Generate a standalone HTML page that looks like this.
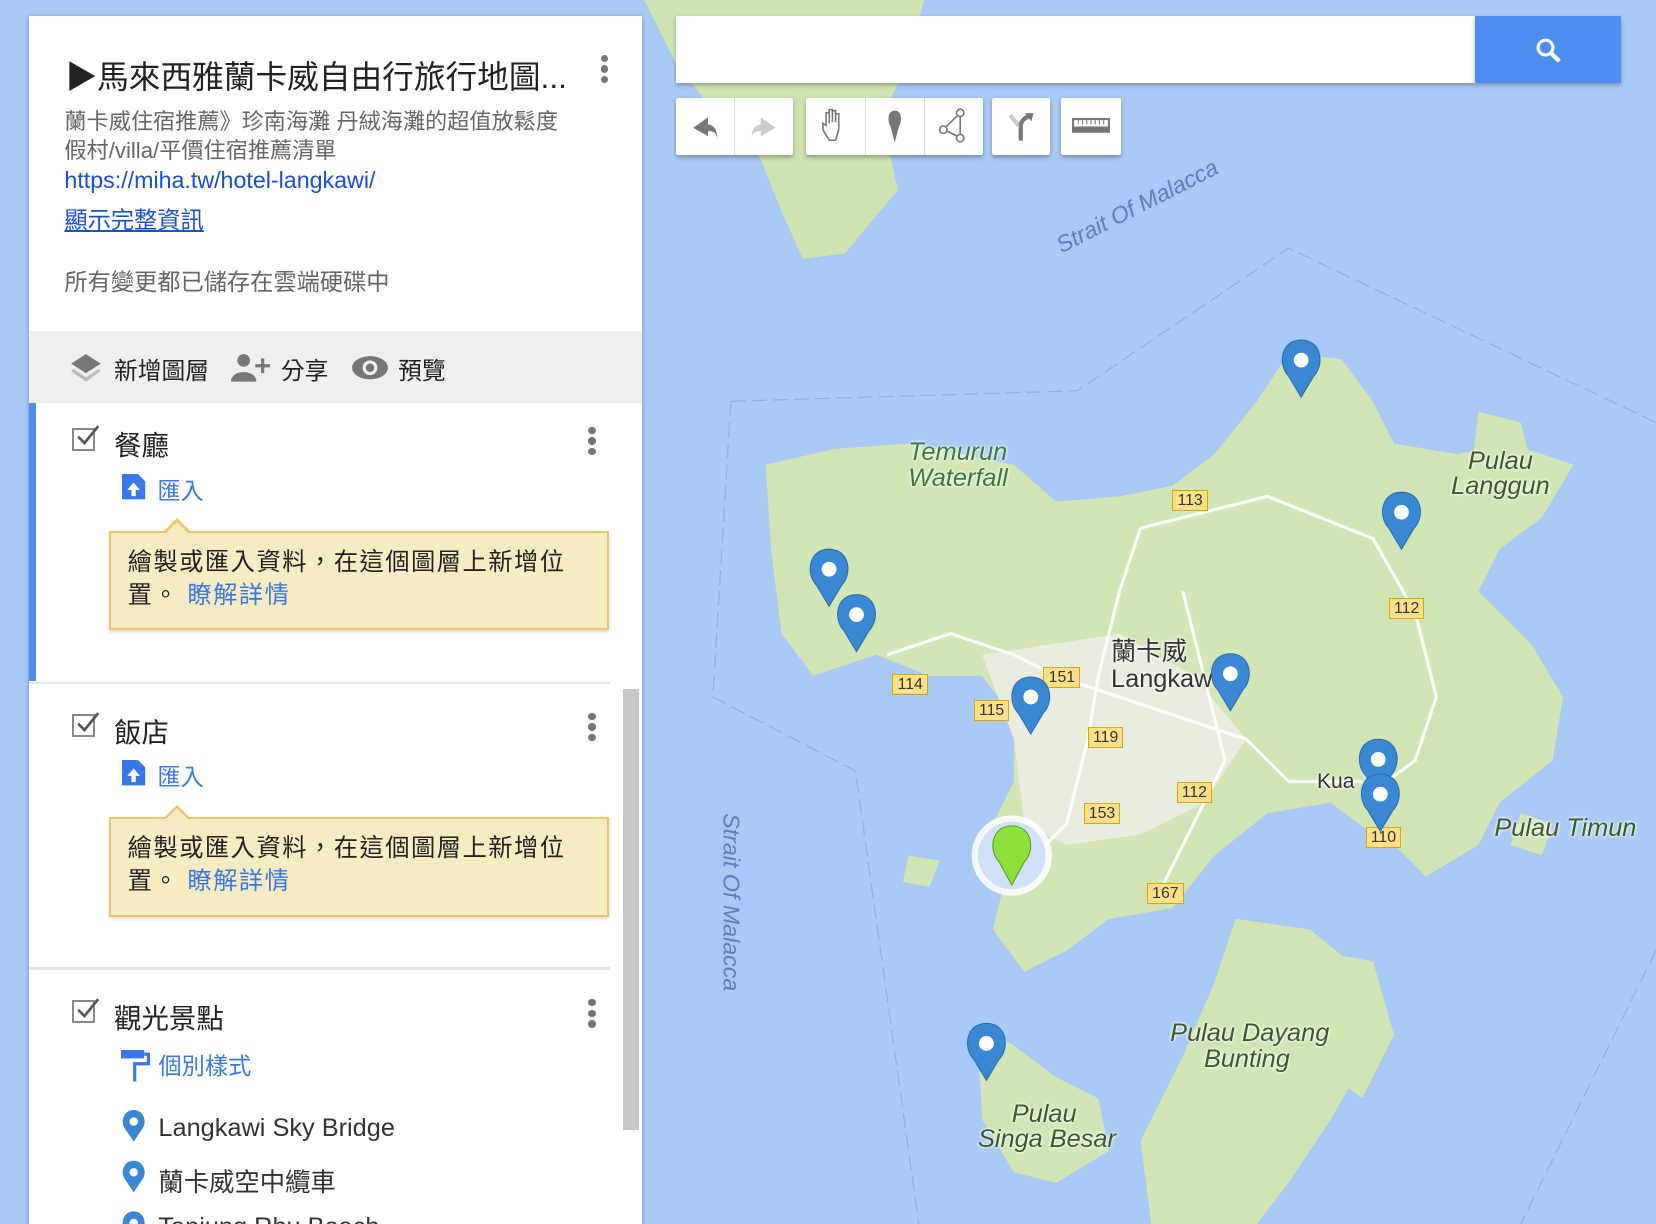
<!DOCTYPE html>
<html><head><meta charset="utf-8">
<style>
html,body{margin:0;padding:0;width:1656px;height:1224px;overflow:hidden;background:#a9c9f6}
#w{position:relative;width:1568px;height:1159px;zoom:1.05612;overflow:hidden;font-family:"Liberation Sans","Noto Sans CJK TC",sans-serif}
.a{position:absolute}
#panel{left:27px;top:15px;width:581px;height:1160px;background:#fff;box-shadow:0 1px 4px rgba(0,0,0,.3)}
.dots{position:absolute;width:7px}
.dots i{display:block;width:7px;height:7px;border-radius:50%;background:#777;margin-bottom:3px}
.cb{position:absolute;width:22px;height:22px;border:2px solid #888;box-sizing:border-box}
.cb svg{position:absolute;left:1px;top:-5px}
.lname{font-size:26px;color:#222}
.blue{color:#3b78e7}
.tip{position:absolute;left:76px;width:474px;height:94px;background:#f6ecc2;border:2px solid #f0c36d;box-sizing:border-box;font-size:23px;letter-spacing:1.4px;line-height:31px;padding:13px 16px;color:#222;box-shadow:0 2px 3px rgba(0,0,0,.15)}
.tip:before{content:"";position:absolute;left:50px;top:-14px;width:0;height:0;border:13px solid transparent;border-bottom-color:#f0c36d;border-top:0}
.tip:after{content:"";position:absolute;left:52px;top:-11px;width:0;height:0;border:11px solid transparent;border-bottom-color:#f6ecc2;border-top:0}
.btn{position:absolute;top:93px;height:54px;background:#fff;border-radius:2px;box-shadow:0 2px 4px rgba(0,0,0,.3)}
.lbl{position:absolute;font-style:italic;color:#3a5a2a;font-size:24px;line-height:24px;text-shadow:0 0 3px #fff,0 0 3px #fff}
.rt{position:absolute;background:#fce08a;border:1px solid #d9a900;font-size:15px;padding:0 4px;line-height:18px;color:#333}
</style></head><body><div id="w">
<svg class="a" style="left:0;top:0" width="1568" height="1159">
<path d="M610 0 L875 0 L860 60 L835 110 L850 180 L800 240 L760 245 L740 200 L720 150 L680 110 L640 60 L620 20Z" fill="#cfe4b1"/>
<path d="M725 440 L790 425 L860 420 L960 440 L1000 475 L1060 470 L1110 460 L1150 430 L1190 380 L1220 335 L1270 340 L1300 380 L1320 420 L1380 430 L1430 420 L1490 440 L1460 490 L1420 520 L1400 560 L1450 610 L1480 660 L1470 720 L1420 760 L1400 800 L1350 830 L1320 800 L1300 790 L1260 760 L1200 770 L1150 810 L1110 860 L1050 870 L1010 900 L970 920 L940 880 L950 840 L930 800 L960 740 L960 680 L930 640 L880 640 L830 620 L770 640 L740 600 L730 520Z" fill="#d2e5b5"/>
<path d="M930 620 L1060 600 L1130 640 L1180 700 L1140 760 L1080 790 L1010 800 L970 780 L960 700Z" fill="#e9ecdf"/>
<path d="M1170 870 L1240 880 L1290 920 L1300 990 L1260 1060 L1220 1120 L1190 1159 L1090 1159 L1080 1080 L1120 1000 L1150 930Z" fill="#d2e5b5"/>
<path d="M1240 900 L1300 910 L1320 980 L1290 1040 L1250 1010Z" fill="#d2e5b5"/>
<path d="M925 970 L960 990 L1000 1020 L1040 1040 L1050 1090 L1000 1120 L960 1110 L930 1060Z" fill="#d2e5b5"/>
<path d="M1400 390 L1440 400 L1450 440 L1420 470 L1395 430Z" fill="#d2e5b5"/>
<path d="M1440 770 L1470 780 L1460 810 L1430 800Z M860 810 L890 815 L880 840 L855 835Z" fill="#d2e5b5"/>
<g fill="none" stroke="#fff" stroke-width="3" opacity=".9">
<path d="M840 620 L900 600 L960 620 L1000 640 L1060 660 L1120 680 L1180 700 L1220 740 L1290 740"/>
<path d="M1080 500 L1200 470 L1300 510 L1340 580 L1360 660 L1340 720 L1300 750"/>
<path d="M1080 500 L1060 560 L1040 640 L1030 700 L1010 780 L960 830"/>
<path d="M1120 560 L1140 640 L1160 720 L1130 780 L1100 840"/>
</g>
<g fill="none" stroke="#8aa0c0" stroke-width="1.2" stroke-dasharray="14 6" opacity=".6">
<path d="M692 380 L1020 370 L1220 235 L1568 400"/><path d="M692 380 L675 660 L810 730 L870 1159"/><path d="M1568 900 L1440 1159"/>
</g>
<g font-family="Liberation Sans" font-style="italic" fill="#5c7fc2" font-size="22">
<text transform="translate(1005 240) rotate(-27)">Strait Of Malacca</text>
<text transform="translate(685 770) rotate(90)">Strait Of Malacca</text>
</g>
</svg>
<div class="lbl" style="left:860px;top:417px;color:#3a7a3a">Temurun<br>Waterfall</div>
<div class="lbl" style="left:1390px;top:425px">Pulau<br><span style="margin-left:-16px">Langgun</span></div>
<div class="lbl" style="left:1415px;top:773px;font-style:italic">Pulau Timun</div>
<div class="lbl" style="left:1108px;top:967px">Pulau Dayang<br><span style="margin-left:32px">Bunting</span></div>
<div class="lbl" style="left:958px;top:1043px">Pulau<br><span style="margin-left:-32px">Singa Besar</span></div>
<div class="lbl" style="left:1052px;top:605px;font-style:normal;color:#333;line-height:26px">蘭卡威<br>Langkaw</div>
<div class="lbl" style="left:1247px;top:728px;font-style:normal;color:#333;font-size:20px">Kua</div>
<div class="rt" style="left:1110px;top:464px">113</div>
<div class="rt" style="left:1315px;top:566px">112</div>
<div class="rt" style="left:845px;top:638px">114</div>
<div class="rt" style="left:988px;top:632px">151</div>
<div class="rt" style="left:922px;top:663px">115</div>
<div class="rt" style="left:1030px;top:688px">119</div>
<div class="rt" style="left:1114px;top:740px">112</div>
<div class="rt" style="left:1026px;top:760px">153</div>
<div class="rt" style="left:1086px;top:836px">167</div>
<div class="rt" style="left:1293px;top:783px">110</div>
<svg class="a" style="left:0;top:0" width="1568" height="1159">
<defs><g id="pin"><path d="M0 0 C-20 0 -22 24 -12 34 L0 54 L12 34 C22 24 20 0 0 0Z" fill="#3a87d3" stroke="#2a6cb0" stroke-width="1"/><circle cx="0" cy="19" r="7" fill="#fff"/></g></defs>
<use href="#pin" x="1232" y="322"/><use href="#pin" x="1327" y="466"/><use href="#pin" x="785" y="520"/><use href="#pin" x="811" y="563"/><use href="#pin" x="1165" y="619"/><use href="#pin" x="976" y="641"/><use href="#pin" x="1305" y="700"/><use href="#pin" x="1307" y="733"/><use href="#pin" x="934" y="969"/>
<circle cx="958" cy="810" r="38" fill="#fff" opacity=".85"/><circle cx="958" cy="810" r="32" fill="#cfe0f8"/>
<path d="M958 782 C938 782 936 806 946 816 L958 838 L970 816 C980 806 978 782 958 782Z" fill="#8fe03a" stroke="#5a9a20"/>
</svg>
<div class="a" style="left:640px;top:15px;width:757px;height:64px;background:#fff;box-shadow:0 2px 4px rgba(0,0,0,.3)"></div>
<div class="a" style="left:1397px;top:15px;width:138px;height:64px;background:#4d8ef0;box-shadow:0 2px 4px rgba(0,0,0,.3)">
<svg style="position:absolute;left:56px;top:20px" width="28" height="28"><circle cx="10" cy="10" r="7" fill="none" stroke="#fff" stroke-width="3"/><path d="M15 15 L23 23" stroke="#fff" stroke-width="4"/></svg></div>
<div class="btn" style="left:640px;width:111px"><div class="a" style="left:55px;top:0;width:1px;height:54px;background:#ddd"></div>
<svg class="a" style="left:12px;top:14px" width="90" height="28"><path d="M18 4 L4 14 L18 22 L18 17 C24 17 27 20 27 26 C27 14 22 11 18 11Z" fill="#777"/><path d="M68 4 L82 14 L68 22 L68 17 C62 17 59 20 59 26 C59 14 64 11 68 11Z" fill="#ccc"/></svg></div>
<div class="btn" style="left:763px;width:168px"><div class="a" style="left:56px;top:0;width:1px;height:54px;background:#ddd"></div><div class="a" style="left:112px;top:0;width:1px;height:54px;background:#ddd"></div>
<svg class="a" style="left:0;top:0" width="168" height="54"><path d="M22 40 L16 30 L16 24 L19 26 L19 14 L22 14 L22 24 L22 11 L25 11 L25 23 L25 12 L28 12 L28 23 L28 15 L31 15 L31 30 L28 40Z" fill="none" stroke="#777" stroke-width="1.5"/><path d="M84 12 C77 12 77 22 80 27 L84 42 L88 27 C91 22 91 12 84 12Z" fill="#777"/><circle cx="146" cy="14" r="3.5" fill="none" stroke="#777" stroke-width="1.5"/><circle cx="130" cy="30" r="3.5" fill="none" stroke="#777" stroke-width="1.5"/><circle cx="146" cy="38" r="3.5" fill="none" stroke="#777" stroke-width="1.5"/><path d="M143 17 L133 27 M133 31 L143 36 M146 18 L146 34" stroke="#777" stroke-width="1.5"/></svg></div>
<div class="btn" style="left:939px;width:55px"><svg class="a" style="left:14px;top:12px" width="28" height="30"><path d="M4 4 L12 14" stroke="#ccc" stroke-width="4"/><path d="M14 28 L14 14 C14 10 18 6 22 5" stroke="#777" stroke-width="4" fill="none"/><path d="M18 2 L26 2 L24 10Z" fill="#777"/></svg></div>
<div class="btn" style="left:1005px;width:56px"><svg class="a" style="left:10px;top:19px" width="36" height="16"><rect x="0" y="0" width="36" height="14" fill="#777"/><rect x="2" y="2" width="32" height="6" fill="#fff"/><path d="M6 2v4M10 2v4M14 2v4M18 2v4M22 2v4M26 2v4M30 2v4" stroke="#777"/></svg></div>

<div id="panel" class="a">
<div class="a" style="left:35px;top:34px;font-size:30px;color:#222;white-space:nowrap">▶馬來西雅蘭卡威自由行旅行地圖...</div>
<div class="dots" style="left:542px;top:37px"><i></i><i></i><i></i></div>
<div class="a" style="left:34px;top:86px;font-size:21px;line-height:28px;color:#666;width:540px;white-space:nowrap">蘭卡威住宿推薦》珍南海灘 丹絨海灘的超值放鬆度<br>假村/villa/平價住宿推薦清單</div>
<div class="a" style="left:34px;top:143px;font-size:22px;color:#1a4fd0">https://miha.tw/hotel-langkawi/</div>
<div class="a" style="left:34px;top:175px;font-size:22px;color:#1a4fd0;text-decoration:underline">顯示完整資訊</div>
<div class="a" style="left:34px;top:234px;font-size:22px;color:#666">所有變更都已儲存在雲端硬碟中</div>
<div class="a" style="left:0;top:298px;width:581px;height:69px;background:#efefef">
<svg class="a" style="left:38px;top:20px" width="32" height="30"><path d="M16 2 L30 11 L16 20 L2 11Z" fill="#777"/><path d="M4 16 L16 24 L28 16 L30 18 L16 28 L2 18Z" fill="#bbb"/></svg>
<div class="a" style="left:81px;top:19px;font-size:22.5px;color:#222">新增圖層</div>
<svg class="a" style="left:192px;top:20px" width="38" height="30"><circle cx="12" cy="8" r="6" fill="#777"/><path d="M0 28 C0 16 24 16 24 28Z" fill="#777"/><path d="M30 6 V20 M23 13 H37" stroke="#777" stroke-width="3"/></svg>
<div class="a" style="left:239px;top:19px;font-size:22.5px;color:#222">分享</div>
<svg class="a" style="left:305px;top:22px" width="36" height="26"><ellipse cx="18" cy="13" rx="17" ry="11" fill="#777"/><circle cx="18" cy="13" r="7" fill="#efefef"/><circle cx="18" cy="13" r="4" fill="#777"/></svg>
<div class="a" style="left:350px;top:19px;font-size:22.5px;color:#222">預覽</div>
</div>
<div class="a" style="left:0;top:367px;width:7px;height:263px;background:#4d8ef0"></div>
<div class="a" style="left:0;top:631px;width:551px;height:2px;background:#e6e6e6"></div>
<div class="a" style="left:0;top:901px;width:551px;height:2px;background:#e6e6e6"></div>
<div class="a" style="left:563px;top:637px;width:15px;height:418px;background:#c8c8c8"></div>

<div class="cb" style="left:41px;top:390px"><svg width="24" height="22"><path d="M3 12 L9 18 L22 2" fill="none" stroke="#555" stroke-width="2.5"/></svg></div>
<div class="a lname" style="left:81px;top:386px">餐廳</div>
<div class="dots" style="left:530px;top:389px"><i></i><i></i><i></i></div>
<svg class="a" style="left:89px;top:434px" width="22" height="24"><path d="M0 0 H15 L22 7 V24 H0Z" fill="#3b78e7"/><path d="M11 8 L17 15 H13 V21 H9 V15 H5Z" fill="#fff"/></svg>
<div class="a blue" style="left:122px;top:432px;font-size:22px">匯入</div>
<div class="tip" style="top:488px">繪製或匯入資料，在這個圖層上新增位置。 <span class="blue">瞭解詳情</span></div>

<div class="cb" style="left:41px;top:661px"><svg width="24" height="22"><path d="M3 12 L9 18 L22 2" fill="none" stroke="#555" stroke-width="2.5"/></svg></div>
<div class="a lname" style="left:81px;top:657px">飯店</div>
<div class="dots" style="left:530px;top:660px"><i></i><i></i><i></i></div>
<svg class="a" style="left:89px;top:705px" width="22" height="24"><path d="M0 0 H15 L22 7 V24 H0Z" fill="#3b78e7"/><path d="M11 8 L17 15 H13 V21 H9 V15 H5Z" fill="#fff"/></svg>
<div class="a blue" style="left:122px;top:703px;font-size:22px">匯入</div>
<div class="tip" style="top:759px">繪製或匯入資料，在這個圖層上新增位置。 <span class="blue">瞭解詳情</span></div>

<div class="cb" style="left:41px;top:932px"><svg width="24" height="22"><path d="M3 12 L9 18 L22 2" fill="none" stroke="#555" stroke-width="2.5"/></svg></div>
<div class="a lname" style="left:81px;top:928px">觀光景點</div>
<div class="dots" style="left:530px;top:931px"><i></i><i></i><i></i></div>
<svg class="a" style="left:88px;top:979px" width="28" height="32"><rect x="0" y="0" width="22" height="8" fill="#3b78e7"/><path d="M22 4 H26 V13 H13 V30" fill="none" stroke="#3b78e7" stroke-width="3"/></svg>
<div class="a blue" style="left:123px;top:976px;font-size:22px">個別樣式</div>
<svg class="a" style="left:88px;top:1036px" width="26" height="120"><g fill="#3a87d3"><path d="M12 0 C2 0 -1 12 4 18 L12 30 L20 18 C25 12 22 0 12 0Z"/><path d="M12 48 C2 48 -1 60 4 66 L12 78 L20 66 C25 60 22 48 12 48Z"/><path d="M12 96 C2 96 -1 108 4 114 L12 126 L20 114 C25 108 22 96 12 96Z"/></g><g fill="#fff"><circle cx="12" cy="11" r="4"/><circle cx="12" cy="59" r="4"/><circle cx="12" cy="107" r="4"/></g></svg>
<div class="a" style="left:123px;top:1040px;font-size:24px;color:#333">Langkawi Sky Bridge</div>
<div class="a" style="left:123px;top:1086px;font-size:24px;color:#333">蘭卡威空中纜車</div>
<div class="a" style="left:123px;top:1134px;font-size:24px;color:#333">Tanjung Rhu Beach</div>
</div>
</div></body></html>
